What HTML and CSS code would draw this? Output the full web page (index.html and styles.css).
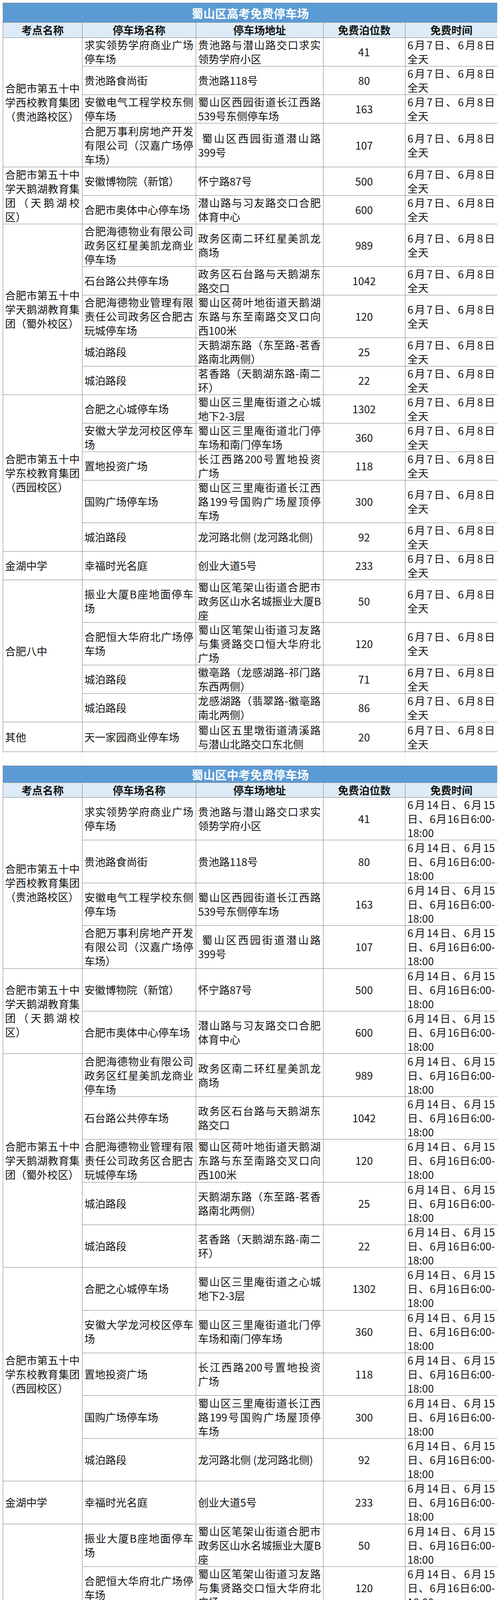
FILE: index.html
```html
<!DOCTYPE html>
<html lang="zh-CN">
<head>
<meta charset="utf-8">
<title>蜀山区高考、中考免费停车场</title>
<link rel="stylesheet" href="styles.css">
</head>
<body>

<table class="sheet gk">
  <colgroup>
    <col class="c1"><col class="c2"><col class="c3"><col class="c4"><col class="c5">
  </colgroup>
  <thead>
    <tr class="trow"><th class="title" colspan="5">蜀山区高考免费停车场</th></tr>
    <tr class="head"><th>考点名称</th><th>停车场名称</th><th>停车场地址</th><th>免费泊位数</th><th>免费时间</th></tr>
  </thead>
  <tbody>
    <tr>
      <td rowspan="4"><span class="jl">合肥市第五十中</span><span class="jl">学西校教育集团</span><span class="ln">（贵池路校区）</span></td>
      <td><span class="jl">求实领势学府商业广场</span><span class="ln">停车场</span></td>
      <td><span class="jl">贵池路与潜山路交口求实</span><span class="ln">领势学府小区</span></td>
      <td class="num">41</td>
      <td><span class="jl">6月7日、6月8日</span><span class="ln">全天</span></td>
    </tr>
    <tr>
      <td>贵池路食尚街</td>
      <td>贵池路118号</td>
      <td class="num">80</td>
      <td><span class="jl">6月7日、6月8日</span><span class="ln">全天</span></td>
    </tr>
    <tr>
      <td><span class="jl">安徽电气工程学校东侧</span><span class="ln">停车场</span></td>
      <td><span class="jl">蜀山区西园街道长江西路</span><span class="ln">539号东侧停车场</span></td>
      <td class="num">163</td>
      <td><span class="jl">6月7日、6月8日</span><span class="ln">全天</span></td>
    </tr>
    <tr class="t3 tall">
      <td><span class="jl">合肥万事利房地产开发</span><span class="jl">有限公司（汉嘉广场停</span><span class="ln">车场）</span></td>
      <td><span class="jl ind">蜀山区西园街道潜山路</span><span class="ln">399号</span></td>
      <td class="num">107</td>
      <td><span class="jl">6月7日、6月8日</span><span class="ln">全天</span></td>
    </tr>
    <tr>
      <td rowspan="2"><span class="jl">合肥市第五十中</span><span class="jl">学天鹅湖教育集</span><span class="jl">团（天鹅湖校</span><span class="ln">区）</span></td>
      <td>安徽博物院（新馆）</td>
      <td>怀宁路87号</td>
      <td class="num">500</td>
      <td><span class="jl">6月7日、6月8日</span><span class="ln">全天</span></td>
    </tr>
    <tr>
      <td>合肥市奥体中心停车场</td>
      <td><span class="jl">潜山路与习友路交口合肥</span><span class="ln">体育中心</span></td>
      <td class="num">600</td>
      <td><span class="jl">6月7日、6月8日</span><span class="ln">全天</span></td>
    </tr>
    <tr class="t3">
      <td rowspan="5"><span class="jl">合肥市第五十中</span><span class="jl">学天鹅湖教育集</span><span class="ln">团（蜀外校区）</span></td>
      <td><span class="jl">合肥海德物业有限公司</span><span class="jl">政务区红星美凯龙商业</span><span class="ln">停车场</span></td>
      <td><span class="jl">政务区南二环红星美凯龙</span><span class="ln">商场</span></td>
      <td class="num">989</td>
      <td><span class="jl">6月7日、6月8日</span><span class="ln">全天</span></td>
    </tr>
    <tr>
      <td>石台路公共停车场</td>
      <td><span class="jl">政务区石台路与天鹅湖东</span><span class="ln">路交口</span></td>
      <td class="num">1042</td>
      <td><span class="jl">6月7日、6月8日</span><span class="ln">全天</span></td>
    </tr>
    <tr class="t3">
      <td><span class="jl">合肥海德物业管理有限</span><span class="jl">责任公司政务区合肥古</span><span class="ln">玩城停车场</span></td>
      <td><span class="jl">蜀山区荷叶地街道天鹅湖</span><span class="jl">东路与东至南路交叉口向</span><span class="ln">西100米</span></td>
      <td class="num">120</td>
      <td><span class="jl">6月7日、6月8日</span><span class="ln">全天</span></td>
    </tr>
    <tr>
      <td>城泊路段</td>
      <td><span class="jl">天鹅湖东路（东至路-茗香</span><span class="ln">路南北两侧）</span></td>
      <td class="num">25</td>
      <td><span class="jl">6月7日、6月8日</span><span class="ln">全天</span></td>
    </tr>
    <tr>
      <td>城泊路段</td>
      <td><span class="jl">茗香路（天鹅湖东路-南二</span><span class="ln">环）</span></td>
      <td class="num">22</td>
      <td><span class="jl">6月7日、6月8日</span><span class="ln">全天</span></td>
    </tr>
    <tr>
      <td rowspan="5"><span class="jl">合肥市第五十中</span><span class="jl">学东校教育集团</span><span class="ln">（西园校区）</span></td>
      <td>合肥之心城停车场</td>
      <td><span class="jl">蜀山区三里庵街道之心城</span><span class="ln">地下2-3层</span></td>
      <td class="num">1302</td>
      <td><span class="jl">6月7日、6月8日</span><span class="ln">全天</span></td>
    </tr>
    <tr>
      <td><span class="jl">安徽大学龙河校区停车</span><span class="ln">场</span></td>
      <td><span class="jl">蜀山区三里庵街道北门停</span><span class="ln">车场和南门停车场</span></td>
      <td class="num">360</td>
      <td><span class="jl">6月7日、6月8日</span><span class="ln">全天</span></td>
    </tr>
    <tr>
      <td>置地投资广场</td>
      <td><span class="jl">长江西路200号置地投资</span><span class="ln">广场</span></td>
      <td class="num">118</td>
      <td><span class="jl">6月7日、6月8日</span><span class="ln">全天</span></td>
    </tr>
    <tr class="t3">
      <td>国购广场停车场</td>
      <td><span class="jl">蜀山区三里庵街道长江西</span><span class="jl">路199号国购广场屋顶停</span><span class="ln">车场</span></td>
      <td class="num">300</td>
      <td><span class="jl">6月7日、6月8日</span><span class="ln">全天</span></td>
    </tr>
    <tr>
      <td>城泊路段</td>
      <td>龙河路北侧 (龙河路北侧)</td>
      <td class="num">92</td>
      <td><span class="jl">6月7日、6月8日</span><span class="ln">全天</span></td>
    </tr>
    <tr>
      <td>金湖中学</td>
      <td>幸福时光名庭</td>
      <td>创业大道5号</td>
      <td class="num">233</td>
      <td><span class="jl">6月7日、6月8日</span><span class="ln">全天</span></td>
    </tr>
    <tr class="t3">
      <td rowspan="4">合肥八中</td>
      <td><span class="jl">振业大厦B座地面停车</span><span class="ln">场</span></td>
      <td><span class="jl">蜀山区笔架山街道合肥市</span><span class="jl">政务区山水名城振业大厦B</span><span class="ln">座</span></td>
      <td class="num">50</td>
      <td><span class="jl">6月7日、6月8日</span><span class="ln">全天</span></td>
    </tr>
    <tr class="t3">
      <td><span class="jl">合肥恒大华府北广场停</span><span class="ln">车场</span></td>
      <td><span class="jl">蜀山区笔架山街道习友路</span><span class="jl">与集贤路交口恒大华府北</span><span class="ln">广场</span></td>
      <td class="num">120</td>
      <td><span class="jl">6月7日、6月8日</span><span class="ln">全天</span></td>
    </tr>
    <tr class="short">
      <td>城泊路段</td>
      <td><span class="jl">徽亳路（龙感湖路-祁门路</span><span class="ln">东西两侧）</span></td>
      <td class="num">71</td>
      <td><span class="jl">6月7日、6月8日</span><span class="ln">全天</span></td>
    </tr>
    <tr class="short">
      <td>城泊路段</td>
      <td><span class="jl">龙感湖路（翡翠路-徽亳路</span><span class="ln">南北两侧）</span></td>
      <td class="num">86</td>
      <td><span class="jl">6月7日、6月8日</span><span class="ln">全天</span></td>
    </tr>
    <tr class="last">
      <td>其他</td>
      <td>天一家园商业停车场</td>
      <td><span class="jl">蜀山区五里墩街道清溪路</span><span class="ln">与潜山北路交口东北侧</span></td>
      <td class="num">20</td>
      <td><span class="jl">6月7日、6月8日</span><span class="ln">全天</span></td>
    </tr>
  </tbody>
</table>

<div class="gap"><span></span><span></span><span></span><span></span><span></span></div>

<table class="sheet zk">
  <colgroup>
    <col class="c1"><col class="c2"><col class="c3"><col class="c4"><col class="c5">
  </colgroup>
  <thead>
    <tr class="trow"><th class="title" colspan="5">蜀山区中考免费停车场</th></tr>
    <tr class="head"><th>考点名称</th><th>停车场名称</th><th>停车场地址</th><th>免费泊位数</th><th>免费时间</th></tr>
  </thead>
  <tbody>
    <tr>
      <td rowspan="4"><span class="jl">合肥市第五十中</span><span class="jl">学西校教育集团</span><span class="ln">（贵池路校区）</span></td>
      <td><span class="jl">求实领势学府商业广场</span><span class="ln">停车场</span></td>
      <td><span class="jl">贵池路与潜山路交口求实</span><span class="ln">领势学府小区</span></td>
      <td class="num">41</td>
      <td><span class="jl">6月14日、6月15</span><span class="jl">日、6月16日6:00-</span><span class="ln">18:00</span></td>
    </tr>
    <tr>
      <td>贵池路食尚街</td>
      <td>贵池路118号</td>
      <td class="num">80</td>
      <td><span class="jl">6月14日、6月15</span><span class="jl">日、6月16日6:00-</span><span class="ln">18:00</span></td>
    </tr>
    <tr>
      <td><span class="jl">安徽电气工程学校东侧</span><span class="ln">停车场</span></td>
      <td><span class="jl">蜀山区西园街道长江西路</span><span class="ln">539号东侧停车场</span></td>
      <td class="num">163</td>
      <td><span class="jl">6月14日、6月15</span><span class="jl">日、6月16日6:00-</span><span class="ln">18:00</span></td>
    </tr>
    <tr>
      <td><span class="jl">合肥万事利房地产开发</span><span class="jl">有限公司（汉嘉广场停</span><span class="ln">车场）</span></td>
      <td><span class="jl ind">蜀山区西园街道潜山路</span><span class="ln">399号</span></td>
      <td class="num">107</td>
      <td><span class="jl">6月14日、6月15</span><span class="jl">日、6月16日6:00-</span><span class="ln">18:00</span></td>
    </tr>
    <tr>
      <td rowspan="2"><span class="jl">合肥市第五十中</span><span class="jl">学天鹅湖教育集</span><span class="jl">团（天鹅湖校</span><span class="ln">区）</span></td>
      <td>安徽博物院（新馆）</td>
      <td>怀宁路87号</td>
      <td class="num">500</td>
      <td><span class="jl">6月14日、6月15</span><span class="jl">日、6月16日6:00-</span><span class="ln">18:00</span></td>
    </tr>
    <tr>
      <td>合肥市奥体中心停车场</td>
      <td><span class="jl">潜山路与习友路交口合肥</span><span class="ln">体育中心</span></td>
      <td class="num">600</td>
      <td><span class="jl">6月14日、6月15</span><span class="jl">日、6月16日6:00-</span><span class="ln">18:00</span></td>
    </tr>
    <tr>
      <td rowspan="5"><span class="jl">合肥市第五十中</span><span class="jl">学天鹅湖教育集</span><span class="ln">团（蜀外校区）</span></td>
      <td><span class="jl">合肥海德物业有限公司</span><span class="jl">政务区红星美凯龙商业</span><span class="ln">停车场</span></td>
      <td><span class="jl">政务区南二环红星美凯龙</span><span class="ln">商场</span></td>
      <td class="num">989</td>
      <td><span class="jl">6月14日、6月15</span><span class="jl">日、6月16日6:00-</span><span class="ln">18:00</span></td>
    </tr>
    <tr>
      <td>石台路公共停车场</td>
      <td><span class="jl">政务区石台路与天鹅湖东</span><span class="ln">路交口</span></td>
      <td class="num">1042</td>
      <td><span class="jl">6月14日、6月15</span><span class="jl">日、6月16日6:00-</span><span class="ln">18:00</span></td>
    </tr>
    <tr>
      <td><span class="jl">合肥海德物业管理有限</span><span class="jl">责任公司政务区合肥古</span><span class="ln">玩城停车场</span></td>
      <td><span class="jl">蜀山区荷叶地街道天鹅湖</span><span class="jl">东路与东至南路交叉口向</span><span class="ln">西100米</span></td>
      <td class="num">120</td>
      <td><span class="jl">6月14日、6月15</span><span class="jl">日、6月16日6:00-</span><span class="ln">18:00</span></td>
    </tr>
    <tr>
      <td>城泊路段</td>
      <td><span class="jl">天鹅湖东路（东至路-茗香</span><span class="ln">路南北两侧）</span></td>
      <td class="num">25</td>
      <td><span class="jl">6月14日、6月15</span><span class="jl">日、6月16日6:00-</span><span class="ln">18:00</span></td>
    </tr>
    <tr>
      <td>城泊路段</td>
      <td><span class="jl">茗香路（天鹅湖东路-南二</span><span class="ln">环）</span></td>
      <td class="num">22</td>
      <td><span class="jl">6月14日、6月15</span><span class="jl">日、6月16日6:00-</span><span class="ln">18:00</span></td>
    </tr>
    <tr>
      <td rowspan="5"><span class="jl">合肥市第五十中</span><span class="jl">学东校教育集团</span><span class="ln">（西园校区）</span></td>
      <td>合肥之心城停车场</td>
      <td><span class="jl">蜀山区三里庵街道之心城</span><span class="ln">地下2-3层</span></td>
      <td class="num">1302</td>
      <td><span class="jl">6月14日、6月15</span><span class="jl">日、6月16日6:00-</span><span class="ln">18:00</span></td>
    </tr>
    <tr>
      <td><span class="jl">安徽大学龙河校区停车</span><span class="ln">场</span></td>
      <td><span class="jl">蜀山区三里庵街道北门停</span><span class="ln">车场和南门停车场</span></td>
      <td class="num">360</td>
      <td><span class="jl">6月14日、6月15</span><span class="jl">日、6月16日6:00-</span><span class="ln">18:00</span></td>
    </tr>
    <tr>
      <td>置地投资广场</td>
      <td><span class="jl">长江西路200号置地投资</span><span class="ln">广场</span></td>
      <td class="num">118</td>
      <td><span class="jl">6月14日、6月15</span><span class="jl">日、6月16日6:00-</span><span class="ln">18:00</span></td>
    </tr>
    <tr>
      <td>国购广场停车场</td>
      <td><span class="jl">蜀山区三里庵街道长江西</span><span class="jl">路199号国购广场屋顶停</span><span class="ln">车场</span></td>
      <td class="num">300</td>
      <td><span class="jl">6月14日、6月15</span><span class="jl">日、6月16日6:00-</span><span class="ln">18:00</span></td>
    </tr>
    <tr>
      <td>城泊路段</td>
      <td>龙河路北侧 (龙河路北侧)</td>
      <td class="num">92</td>
      <td><span class="jl">6月14日、6月15</span><span class="jl">日、6月16日6:00-</span><span class="ln">18:00</span></td>
    </tr>
    <tr>
      <td>金湖中学</td>
      <td>幸福时光名庭</td>
      <td>创业大道5号</td>
      <td class="num">233</td>
      <td><span class="jl">6月14日、6月15</span><span class="jl">日、6月16日6:00-</span><span class="ln">18:00</span></td>
    </tr>
    <tr>
      <td rowspan="4">合肥八中</td>
      <td><span class="jl">振业大厦B座地面停车</span><span class="ln">场</span></td>
      <td><span class="jl">蜀山区笔架山街道合肥市</span><span class="jl">政务区山水名城振业大厦B</span><span class="ln">座</span></td>
      <td class="num">50</td>
      <td><span class="jl">6月14日、6月15</span><span class="jl">日、6月16日6:00-</span><span class="ln">18:00</span></td>
    </tr>
    <tr>
      <td><span class="jl">合肥恒大华府北广场停</span><span class="ln">车场</span></td>
      <td><span class="jl">蜀山区笔架山街道习友路</span><span class="jl">与集贤路交口恒大华府北</span><span class="ln">广场</span></td>
      <td class="num">120</td>
      <td><span class="jl">6月14日、6月15</span><span class="jl">日、6月16日6:00-</span><span class="ln">18:00</span></td>
    </tr>
    <tr>
      <td>城泊路段</td>
      <td><span class="jl">徽亳路（龙感湖路-祁门路</span><span class="ln">东西两侧）</span></td>
      <td class="num">71</td>
      <td><span class="jl">6月14日、6月15</span><span class="jl">日、6月16日6:00-</span><span class="ln">18:00</span></td>
    </tr>
    <tr>
      <td>城泊路段</td>
      <td><span class="jl">龙感湖路（翡翠路-徽亳路</span><span class="ln">南北两侧）</span></td>
      <td class="num">86</td>
      <td><span class="jl">6月14日、6月15</span><span class="jl">日、6月16日6:00-</span><span class="ln">18:00</span></td>
    </tr>
    <tr>
      <td>其他</td>
      <td>天一家园商业停车场</td>
      <td><span class="jl">蜀山区五里墩街道清溪路</span><span class="ln">与潜山北路交口东北侧</span></td>
      <td class="num">20</td>
      <td><span class="jl">6月14日、6月15</span><span class="jl">日、6月16日6:00-</span><span class="ln">18:00</span></td>
    </tr>
  </tbody>
</table>

</body>
</html>
```

FILE: styles.css
```css
html, body {
  background: #ffffff;
}

body {
  margin: 7px 7px 0;
  font-family: "Noto Sans CJK SC", sans-serif;
  color: #141414;
}

.sheet {
  border-collapse: collapse;
  table-layout: fixed;
  width: 1266px;
}

.c1 { width: 203px; }
.c2 { width: 291px; }
.c3 { width: 326px; }
.c4 { width: 210px; }
.c5 { width: 236px; }

.sheet th,
.sheet td {
  border: 1px solid #808080;
  padding: 0 6px 0 5px;
  font-size: 27px;
  line-height: 34px;
  vertical-align: middle;
  text-align: left;
  font-weight: 400;
}

/* row heights */
.gk tbody tr { height: 73px; }
.gk tbody tr.t3 { height: 109px; }
.gk tbody tr.tall { height: 112px; }
.gk tbody tr.short { height: 72px; }
.gk tbody tr.last { height: 76px; }
.zk tbody tr { height: 109.4px; }
.gk .trow { height: 50px; }
.gk .head { height: 39px; }
.zk .trow { height: 43px; }
.zk .head { height: 38px; }

.sheet .title {
  background: #5b9bd5;
  color: #ffffff;
  font-size: 30px;
  font-weight: 700;
  text-align: center;
  line-height: 36px;
  padding: 0;
}

.sheet .head th {
  background: #ddebf7;
  font-weight: 700;
  font-size: 27px;
  text-align: center;
  line-height: 34px;
  padding: 0;
  color: #111111;
}

.sheet td.num {
  text-align: center;
}

.jl,
.ln {
  display: block;
  height: 36px;
  line-height: 36px;
  white-space: nowrap;
}

.jl {
  text-align: justify;
  text-align-last: justify;
}

.ln {
  text-align: left;
}

.jl.ind {
  padding-left: 10px;
}

.gap {
  display: grid;
  grid-template-columns: 203px 291px 326px 210px 236px;
  width: 1266px;
  height: 35px;
}

.gap span {
  border-left: 1px solid #e6e9ee;
}
```
